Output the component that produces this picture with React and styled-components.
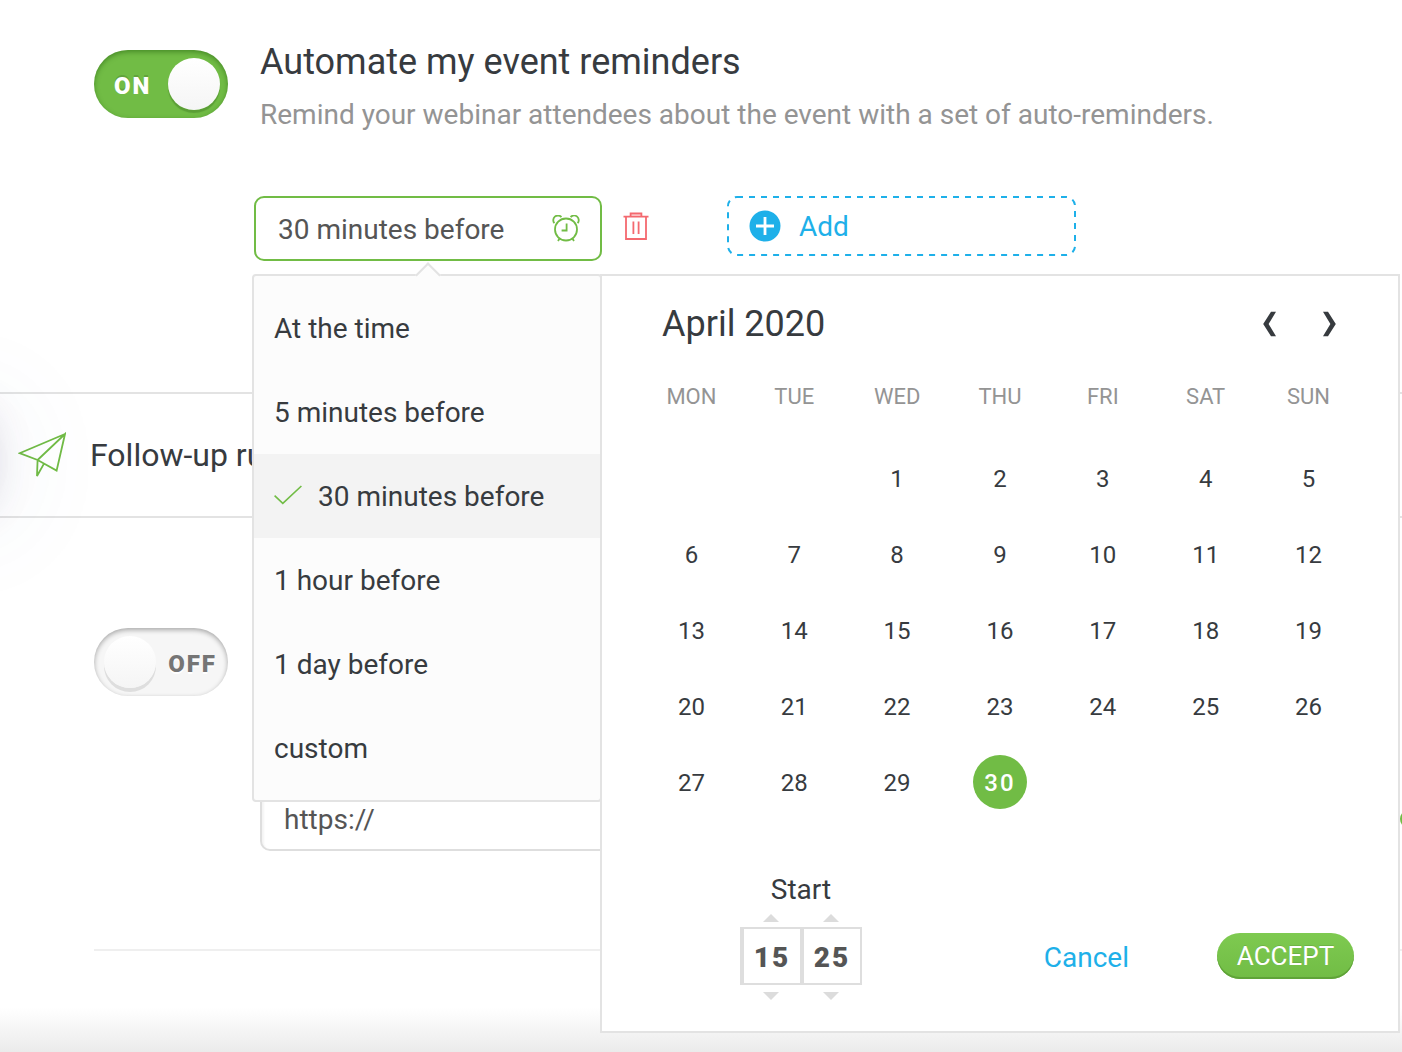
import React, { useState } from 'react'
import styled, { createGlobalStyle } from "styled-components";

const GlobalStyle = createGlobalStyle`
  *, *::before, *::after {
    box-sizing: border-box;
  }
  body {
    margin: 0;
    background: #fff;
    color: #373b3f;
    font-family: Roboto, "Liberation Sans", sans-serif;
    font-size: 28px;
    line-height: 36px;
  }
  button, input {
    font: inherit;
    color: inherit;
  }
  button {
    padding: 0;
    border: 0;
    background: none;
    cursor: pointer;
  }
  h1, h2, p {
    margin: 0;
    font-weight: 400;
  }
`;

const StyledPage = styled.main`
  position: relative;
  display: flex;
  flex-direction: column;
  min-height: 100vh;
  overflow: hidden;
`;

/* soft shadow of the tab docked outside the left edge */
const StyledDock = styled.div`
  position: absolute;
  left: -60px;
  top: 410px;
  width: 50px;
  height: 100px;
  border-radius: 50px;
  box-shadow: 0 0 40px rgba(80, 60, 110, 0.22), 0 4px 120px rgba(70, 100, 160, 0.16);
  pointer-events: none;
`;

const StyledBottomFade = styled.div`
  height: 44px;
  margin-top: auto;
  background: linear-gradient(rgba(235, 235, 235, 0), #ebebeb);
`;

const StyledReminders = styled.section`
  padding: 40px 0 131px 94px;
`;

const StyledIntro = styled.div`
  display: flex;
  gap: 32px;
  >label {
    margin-top: 10px;
  }
`;

const StyledTitle = styled.h1`
  margin-bottom: 13px;
  font-size: 36px;
  line-height: 44px;
`;

const StyledLead = styled.p`
  color: #949494;
`;

const StyledSwitch = styled.label`
  position: relative;
  display: flex;
  flex: none;
  align-items: center;
  justify-content: ${({$on}) => $on ? 'flex-start' : 'flex-end'};
  width: 134px;
  height: 68px;
  padding: ${({$on}) => $on ? '3px 0 0 20px' : '3px 11px 0 0'};
  border-radius: 34px;
  background: ${({$on}) => $on ? '#71bc45' : '#f6f6f6'};
  box-shadow: ${({$on}) => $on
    ? 'inset 0 2px 5px rgba(30, 90, 10, 0.5)'
    : 'inset 0 2px 5px rgba(0, 0, 0, 0.32)'};
  color: ${({$on}) => $on ? '#fff' : '#757575'};
  font-size: 24px;
  font-weight: 900;
  letter-spacing: 2px;
  text-shadow: ${({$on}) => $on ? '0 -2px 0 rgba(0, 0, 0, 0.15)' : '0 2px 0 #fff'};
  cursor: pointer;
  >input {
    position: absolute;
    inset: 0;
    width: 100%;
    height: 100%;
    margin: 0;
    opacity: 0;
    cursor: pointer;
  }
  &::after {
    content: "";
    position: absolute;
    top: 8px;
    left: ${({$on}) => $on ? '74px' : '10px'};
    width: 52px;
    height: 52px;
    border-radius: 50%;
    background: linear-gradient(#fff, #f5f5f5);
    box-shadow: ${({$on}) => $on ? '0 3px 1px rgba(40, 90, 20, 0.3)' : '0 4px 0 #dedede'};
    pointer-events: none;
  }
`;

const StyledSlots = styled.div`
  position: relative;
  display: flex;
  align-items: flex-start;
  margin: 63px 0 0 160px;
`;

const StyledLabel = styled.span`
  padding-top: 2px;
`;

const StyledSlot = styled.button`
  display: flex;
  flex: none;
  align-items: center;
  justify-content: space-between;
  width: 348px;
  height: 65px;
  padding: 0 20px 0 22px;
  border: 2px solid #71bc45;
  border-radius: 10px;
  background: #fff;
  color: #555;
`;

const StyledRemove = styled.button`
  display: flex;
  margin: 15px 78px 0 21px;
`;

const StyledAdd = styled.button`
  position: relative;
  display: flex;
  align-items: center;
  gap: 18px;
  width: 349px;
  height: 60px;
  padding-left: 22px;
  color: #1eb0e9;
  >.outline {
    position: absolute;
    inset: 0;
    width: 100%;
    height: 100%;
  }
`;

const StyledPopup = styled.div`
  position: absolute;
  z-index: 1;
  top: 78px;
  left: -2px;
  right: 2px;
  display: flex;
  align-items: flex-start;
`;

const StyledMenu = styled.div`
  position: relative;
  z-index: 1;
  flex: none;
  width: 350px;
  padding: 10px 0;
  border: 2px solid #e3e3e3;
  border-radius: 4px;
  background: #fcfcfc;
  &::before {
    content: "";
    position: absolute;
    top: -10px;
    left: 165px;
    width: 18px;
    height: 18px;
    border: solid #e3e3e3;
    border-width: 2px 0 0 2px;
    background: #fcfcfc;
    transform: rotate(45deg);
  }
`;

const StyledOption = styled.button`
  display: flex;
  align-items: center;
  gap: 16px;
  width: 100%;
  height: 84px;
  padding: 0 20px;
  background: ${({$selected}) => $selected ? '#f3f3f3' : 'transparent'};
`;

const StyledCalendar = styled.div`
  flex: 1;
  margin-left: -2px;
  padding: 20px 38px 31px;
  border: 2px solid #e3e3e3;
  background: #fff;
`;

const StyledCalendarHead = styled.div`
  display: flex;
  align-items: center;
  height: 56px;
  padding: 0 23px 0 22px;
  >h2 {
    flex: 1;
    font-size: 36px;
    line-height: 44px;
  }
`;

const StyledArrow = styled.button`
  display: flex;
  margin-left: 43px;
`;

const StyledDays = styled.table`
  width: 100%;
  table-layout: fixed;
  border-collapse: collapse;
  font-size: 24px;
  text-align: center;
  th {
    height: 88px;
    padding: 2px 0 0;
    color: #949494;
    font-size: 22px;
    font-weight: 400;
  }
  td {
    height: 76px;
    padding: 0;
  }
`;

const StyledDay = styled.button`
  width: 54px;
  height: 54px;
  padding-top: 2px;
  border-radius: 50%;
  letter-spacing: ${({$selected}) => $selected ? '2px' : 'normal'};
  background: ${({$selected}) => $selected ? '#71bc45' : 'transparent'};
  color: ${({$selected}) => $selected ? '#fff' : 'inherit'};
  font-weight: ${({$selected}) => $selected ? 500 : 400};
`;

const StyledCalendarFoot = styled.div`
  display: flex;
  align-items: flex-end;
  padding: 52px 6px 0 100px;
`;

const StyledTime = styled.div`
  flex: none;
  text-align: center;
`;

const StyledSpinners = styled.div`
  display: flex;
  margin-top: 6px;
`;

const StyledSpinner = styled.div`
  display: flex;
  flex-direction: column;
  align-items: center;
  & + & {
    margin-left: -2px;
  }
  >button {
    display: flex;
  }
  >input {
    width: 62px;
    height: 58px;
    margin: 5px 0 7px;
    padding: 2px 0 0;
    border: 2px solid #dedede;
    border-left-width: 4px;
    border-radius: 0;
    background: #fff;
    color: #555;
    font-weight: 900;
    letter-spacing: 2px;
    text-align: center;
  }
`;

const StyledActions = styled.div`
  display: flex;
  flex: 1;
  align-items: center;
  justify-content: flex-end;
  gap: 88px;
  margin-bottom: 21px;
`;

const StyledCancel = styled.button`
  padding-top: 4px;
  color: #1eb0e9;
`;

const StyledAccept = styled.button`
  width: 137px;
  height: 46px;
  border-radius: 23px;
  background: linear-gradient(#7eca50, #71bc45);
  box-shadow: inset 0 -2px 0 #5fa338;
  color: #fff;
  font-size: 26px;
  text-shadow: 0 -1px 0 rgba(0, 0, 0, 0.1);
`;

const StyledFollowUp = styled.section`
  display: flex;
  align-items: center;
  gap: 24px;
  height: 126px;
  padding-left: 18px;
  border: solid #e3e3e3;
  border-width: 2px 0;
  >h2 {
    font-size: 32px;
    line-height: 40px;
  }
`;

const StyledRedirect = styled.section`
  display: flex;
  gap: 32px;
  margin-left: 94px;
  padding: 110px 0 98px;
  border-bottom: 2px solid #efefef;
`;

const StyledUrlRow = styled.div`
  display: flex;
  flex: 1;
  align-items: center;
  gap: 24px;
  margin: 158px -16px 0 0;
`;

const StyledUrl = styled.input`
  flex: 1;
  min-width: 0;
  height: 65px;
  padding: 2px 22px 0;
  border: 2px solid #dedede;
  border-radius: 10px;
  box-shadow: inset 2px 2px 2px #f4f4f4;
  color: #555;
`;

const StyledDot = styled.div`
  flex: none;
  width: 18px;
  height: 18px;
  border-radius: 50%;
  background: #71bc45;
`;

const OPTIONS = ['At the time', '5 minutes before', '30 minutes before', '1 hour before', '1 day before', 'custom']
const WEEKDAYS = ['MON', 'TUE', 'WED', 'THU', 'FRI', 'SAT', 'SUN']
// April 2020 starts on a Wednesday
const WEEKS = [0, 1, 2, 3, 4].map((week) => WEEKDAYS.map((_, i) => week * 7 + i - 1))

const ClockIcon = () => (
  <svg width="28" height="28" viewBox="0 1 28 28" fill="none" stroke="#71bc45" strokeWidth="1.8">
    <circle cx="14" cy="15.5" r="11" />
    <path d="M14.6 9.5v7h-5" />
    <path d="M2.4 9.2A4.4 4.4 0 0 1 9.4 3.1M25.6 9.2A4.4 4.4 0 0 0 18.6 3.1" />
    <path d="M7.6 24.6 6 27M20.4 24.6 22 27" />
  </svg>
)

const TrashIcon = () => (
  <svg width="26" height="30" viewBox="0 0 26 30" fill="none" stroke="#f4696f" strokeWidth="1.8">
    <path d="M0.5 5.6h25M3 6v22h20V6" />
    <path d="M7.6 5V2.4h10.8V5" fill="#fac0c2" />
    <path d="M10.4 10.5v12.5M15.6 10.5v12.5" />
  </svg>
)

const PlusIcon = () => (
  <svg width="32" height="32" viewBox="0 0 32 32">
    <circle cx="16" cy="16" r="15.5" fill="#1eb0e9" />
    <path d="M16 7v18M7 16h18" stroke="#fff" strokeWidth="2.8" />
  </svg>
)

const PlaneIcon = () => (
  <svg width="48" height="46" viewBox="0 0 48 46" fill="none" stroke="#71bc45" strokeWidth="1.8">
    <path d="M47 2 1.6 21.2 19.6 28 38.6 38.6 47 2 19.6 28 19 44 26 31.6" />
  </svg>
)

const CheckIcon = () => (
  <svg width="28" height="22" viewBox="0 1 28 22" fill="none" stroke="#71bc45" strokeWidth="1.6">
    <path d="M0.6 11.6 8.8 19.4 27.4 2" />
  </svg>
)

const Chevron = ({next}) => (
  <svg width="16" height="26" viewBox="0 0 16 26" fill="#373b3f">
    {next
      ? <path d="M2 0.8h5L14.8 13 7 25.2H2L9.4 13z" />
      : <path d="M14 0.8H9L1.2 13 9 25.2h5L6.6 13z" />}
  </svg>
)

const Triangle = ({down}) => (
  <svg width="16" height="8" viewBox="0 0 16 8" fill="#dcdcdc">
    <path d={down ? 'M0 0h16L8 8z' : 'M0 8h16L8 0z'} />
  </svg>
)

const Switch = ({label, defaultOn}) => {
  const [on, setOn] = useState(defaultOn)
  return (
    <StyledSwitch $on={on}>
      <input type="checkbox" aria-label={label} checked={on} onChange={() => setOn(!on)} />
      {on ? 'ON' : 'OFF'}
    </StyledSwitch>
  )
}

const Spinner = ({label, start, max}) => {
  const [value, setValue] = useState(start)
  return (
    <StyledSpinner>
      <button type="button" aria-label={`${label} up`} onClick={() => setValue((value + 1) % max)}><Triangle /></button>
      <input aria-label={label} value={value} onChange={(e) => setValue(Number(e.target.value) % max || 0)} />
      <button type="button" aria-label={`${label} down`} onClick={() => setValue((value + max - 1) % max)}><Triangle down /></button>
    </StyledSpinner>
  )
}

const Calendar = () => {
  const [day, setDay] = useState(30)
  return (
    <StyledCalendar>
      <StyledCalendarHead>
        <h2>April 2020</h2>
        <StyledArrow type="button" aria-label="Previous month"><Chevron /></StyledArrow>
        <StyledArrow type="button" aria-label="Next month"><Chevron next /></StyledArrow>
      </StyledCalendarHead>
      <StyledDays>
        <thead>
          <tr>{WEEKDAYS.map((name) => <th key={name}>{name}</th>)}</tr>
        </thead>
        <tbody>
          {WEEKS.map((week) => (
            <tr key={week[0]}>
              {week.map((d) => (
                <td key={d}>
                  {d > 0 && d <= 30 && (
                    <StyledDay type="button" $selected={d === day} onClick={() => setDay(d)}>{d}</StyledDay>
                  )}
                </td>
              ))}
            </tr>
          ))}
        </tbody>
      </StyledDays>
      <StyledCalendarFoot>
        <StyledTime>
          <p>Start</p>
          <StyledSpinners>
            <Spinner label="Hour" start={15} max={24} />
            <Spinner label="Minute" start={25} max={60} />
          </StyledSpinners>
        </StyledTime>
        <StyledActions>
          <StyledCancel type="button">Cancel</StyledCancel>
          <StyledAccept type="button">ACCEPT</StyledAccept>
        </StyledActions>
      </StyledCalendarFoot>
    </StyledCalendar>
  )
}

const App = () => {
  const [option, setOption] = useState('30 minutes before')
  return (
  <>
    <GlobalStyle />
    <StyledPage>
      <StyledReminders>
        <StyledIntro>
          <Switch label="Automate my event reminders" defaultOn={true} />
          <div>
            <StyledTitle>Automate my event reminders</StyledTitle>
            <StyledLead>Remind your webinar attendees about the event with a set of auto-reminders.</StyledLead>
          </div>
        </StyledIntro>
        <StyledSlots>
          <StyledSlot type="button"><StyledLabel>{option}</StyledLabel><ClockIcon /></StyledSlot>
          <StyledRemove type="button" aria-label="Remove reminder"><TrashIcon /></StyledRemove>
          <StyledAdd type="button">
            <svg className="outline" aria-hidden="true">
              <rect x="1" y="1" width="347" height="58" rx="9" fill="none" stroke="#1eb0e9" strokeWidth="2" strokeDasharray="6 6" />
            </svg>
            <PlusIcon /><StyledLabel>Add</StyledLabel>
          </StyledAdd>
          <StyledPopup>
            <StyledMenu>
              {OPTIONS.map((name) => (
                <StyledOption key={name} type="button" $selected={name === option} onClick={() => setOption(name)}>
                  {name === option && <CheckIcon />}
                  <StyledLabel>{name}</StyledLabel>
                </StyledOption>
              ))}
            </StyledMenu>
            <Calendar />
          </StyledPopup>
        </StyledSlots>
      </StyledReminders>
      <StyledFollowUp>
        <PlaneIcon />
        <h2>Follow-up rules</h2>
      </StyledFollowUp>
      <StyledRedirect>
        <Switch label="Redirect attendees" defaultOn={false} />
        <StyledUrlRow>
          <StyledUrl aria-label="Redirect address" defaultValue="https://" />
          <StyledDot />
        </StyledUrlRow>
      </StyledRedirect>
      <StyledBottomFade />
      <StyledDock />
    </StyledPage>
  </>
  )
}

export default App
